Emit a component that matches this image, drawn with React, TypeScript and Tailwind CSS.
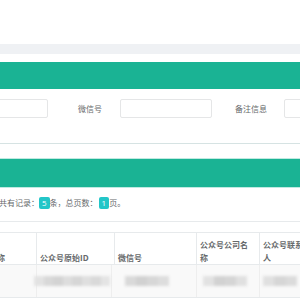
import React from "react";

const font = { fontFamily: '"Open Sans", "Noto Sans CJK SC", sans-serif' };

function Blur({ w, shades }: { w: number; shades: string[] }) {
  return (
    <div className="flex h-[10px] blur-[1.5px]" style={{ width: w }}>
      {shades.map((c, i) => (
        <div key={i} className="flex-1 h-full" style={{ backgroundColor: c }} />
      ))}
    </div>
  );
}

export default function App() {
  return (
    <div className="w-[300px] h-[300px] overflow-hidden bg-white text-[8px] text-[#676a6c]" style={font}>
      <div className="h-[44px] bg-white" />
      <div className="h-[10px] bg-[#eff1f4]" />
      <div className="h-[8px] bg-white" />
      <div className="h-[27px] bg-[#1ab394]" />
      <div className="h-[55px] border-b border-[#d6e3e3] pt-[10px]">
        <div className="flex items-center -ml-[44px] w-[400px]">
          <div className="w-[92px] h-[19px] border border-[#e5e6e7] rounded-[2px] bg-white shrink-0" />
          <div className="w-[72px] text-right pr-[18px] shrink-0 leading-[19px]">微信号</div>
          <div className="w-[92px] h-[19px] border border-[#e5e6e7] rounded-[2px] bg-white shrink-0" />
          <div className="w-[72px] text-right pr-[17px] shrink-0 leading-[19px]">备注信息</div>
          <div className="w-[92px] h-[19px] border border-[#e5e6e7] rounded-[2px] bg-white shrink-0" />
        </div>
      </div>
      <div className="h-[14px] bg-white" />
      <div className="h-[30px] bg-[#1ab394] border-y border-[#bfeae1]" />
      <div className="h-[34px] border-b border-[#e7eaec] pt-[9px]">
        <div className="flex items-center h-[12px] -ml-[1px] whitespace-nowrap leading-[12px]">
          <span>共有记录：</span>
          <span className="bg-[#23c6c8] text-white rounded-[2px] px-[3px] h-[12px] leading-[12px]">5</span>
          <span>条，总页数：</span>
          <span className="bg-[#23c6c8] text-white rounded-[2px] px-[3px] h-[12px] leading-[12px] ml-[1px]">1</span>
          <span>页。</span>
        </div>
      </div>
      <div className="h-[10px] bg-white" />
      <div className="-ml-[40px] w-[360px]">
        <div className="flex h-[33px] border-y border-[#e7eaec] font-bold leading-[13px] text-[#676a6c]">
          <div className="w-[77px] border-r border-[#e7eaec] pl-[5px] flex items-end shrink-0">公众号名称</div>
          <div className="w-[78px] border-r border-[#e7eaec] pl-[3px] flex items-end shrink-0">公众号原始ID</div>
          <div className="w-[82px] border-r border-[#e7eaec] pl-[3px] flex items-end shrink-0">微信号</div>
          <div className="w-[63px] border-r border-[#e7eaec] pl-[3px] flex items-end shrink-0">
            <span>公众号公司名<br />称</span>
          </div>
          <div className="w-[60px] pl-[3px] flex items-end shrink-0">
            <span>公众号联系<br />人</span>
          </div>
        </div>
        <div className="flex h-[33px] border-b border-[#e7eaec] bg-[#f9f9f9]">
          <div className="w-[77px] border-r border-[#eeeeee] shrink-0" />
          <div className="w-[78px] border-r border-[#eeeeee] shrink-0 flex items-center pl-[0px] -ml-[3px]">
            <Blur w={76} shades={["#e2e2e2", "#d8d8d8", "#d3d3d3", "#dddddd", "#d6d6d6", "#dfdfdf", "#d9d9d9", "#e4e4e4"]} />
          </div>
          <div className="w-[82px] border-r border-[#eeeeee] shrink-0 flex items-center pl-[10px] ml-[3px]">
            <Blur w={44} shades={["#d9d9d9", "#d1d1d1", "#d7d7d7", "#dddddd"]} />
          </div>
          <div className="w-[63px] border-r border-[#eeeeee] shrink-0 flex items-center pl-[6px]">
            <Blur w={44} shades={["#e2e2e2", "#d2d2d2", "#d5d5d5", "#e0e0e0"]} />
          </div>
          <div className="w-[60px] shrink-0 flex items-center pl-[3px]">
            <Blur w={34} shades={["#e0e0e0", "#d6d6d6", "#dbdbdb"]} />
          </div>
        </div>
      </div>
    </div>
  );
}
